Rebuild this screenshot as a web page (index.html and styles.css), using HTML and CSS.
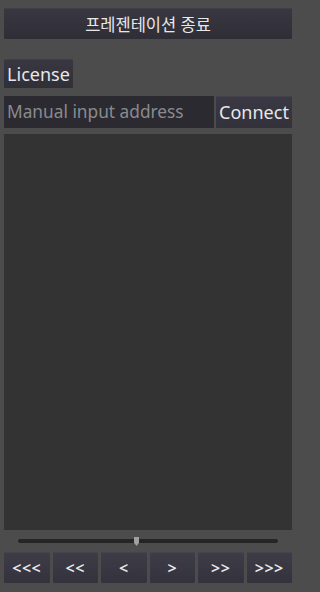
FILE: index.html
```html
<!DOCTYPE html>
<html lang="ko">
<head>
<meta charset="utf-8">
<link rel="stylesheet" href="styles.css">
</head>
<body>
<div class="app">
  <button class="btn top">프레젠테이션 종료</button>
  <div class="license-row"><button class="btn license">License</button></div>
  <div class="connect-row">
    <div class="input">Manual input address</div>
    <button class="btn connect">Connect</button>
  </div>
  <div class="panel"></div>
  <div class="slider">
    <div class="track"></div>
    <div class="thumb"></div>
  </div>
  <div class="nav">
    <button class="btn nav-btn">&lt;&lt;&lt;</button>
    <button class="btn nav-btn">&lt;&lt;</button>
    <button class="btn nav-btn">&lt;</button>
    <button class="btn nav-btn">&gt;</button>
    <button class="btn nav-btn">&gt;&gt;</button>
    <button class="btn nav-btn">&gt;&gt;&gt;</button>
  </div>
</div>
</body>
</html>
```

FILE: styles.css
```css
html, body {
  margin: 0;
  padding: 0;
  background: #4c4c4c;
}
.app {
  width: 296px;
  height: 592px;
  box-sizing: border-box;
  padding: 8px 4px 9px 4px;
  display: flex;
  flex-direction: column;
  font-family: "Noto Sans", "Noto Sans CJK KR", sans-serif;
  color: #e6e6e6;
}
.btn {
  margin: 0;
  padding: 0;
  border: none;
  font-family: inherit;
  color: #e8e8ea;
  background: linear-gradient(#3d3c47, #34333d);
  box-shadow: inset 0 1px 0 rgba(255,255,255,0.04);
  border-radius: 1px;
}
.top {
  height: 31px;
  font-size: 16.5px;
  margin-bottom: 20px;
  background: linear-gradient(#393842, #2f2e36);
}
.license-row {
  display: flex;
  margin-bottom: 8px;
}
.license {
  width: 69px;
  height: 29px;
  font-size: 18px;
  background: linear-gradient(#393842, #302f37);
}
.connect-row {
  display: flex;
  gap: 2px;
  height: 32px;
  margin-bottom: 6px;
}
.input {
  width: 210px;
  box-sizing: border-box;
  background: #2b2a30;
  color: #8a8a8e;
  font-size: 17.3px;
  line-height: 32px;
  padding-left: 3px;
  white-space: nowrap;
  overflow: hidden;
}
.connect {
  flex: 1;
  font-size: 18px;
  background: linear-gradient(#3a3944, #33323b);
}
.panel {
  flex: 1;
  background: #333333;
}
.slider {
  position: relative;
  height: 22px;
  display: flex;
  align-items: center;
  padding: 0 14px;
}
.track {
  flex: 1;
  height: 4px;
  border-radius: 2px;
  background: #252528;
}
.thumb {
  position: absolute;
  left: 130px;
  top: 7px;
  width: 5px;
  height: 9px;
  background: #a0a0a0;
  clip-path: polygon(0 0, 100% 0, 100% 65%, 50% 100%, 0 65%);
}
.nav {
  display: grid;
  grid-template-columns: repeat(6, 1fr);
  gap: 3px;
  height: 31px;
}
.nav-btn {
  font-size: 16px;
  font-weight: 600;
  letter-spacing: 0.5px;
}
```
